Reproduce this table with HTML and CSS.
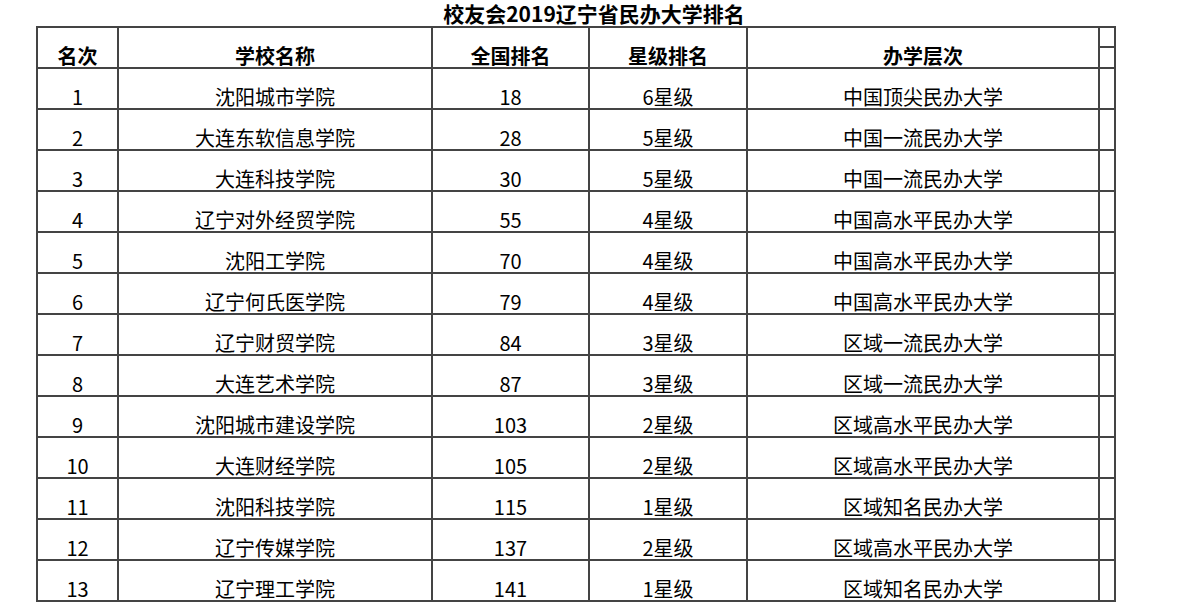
FILE: index.html
```html
<!DOCTYPE html>
<html lang="zh-CN">
<head>
<meta charset="utf-8">
<title>校友会2019辽宁省民办大学排名</title>
<link rel="stylesheet" href="styles.css">
</head>
<body>
<div class="page">
  <div class="title">校友会2019辽宁省民办大学排名</div>
  <table class="rank">
    <colgroup>
      <col class="c-rank">
      <col class="c-name">
      <col class="c-nat">
      <col class="c-star">
      <col class="c-level">
      <col class="c-extra">
    </colgroup>
    <thead>
      <tr class="h1">
        <th rowspan="2">名次</th>
        <th rowspan="2">学校名称</th>
        <th rowspan="2">全国排名</th>
        <th rowspan="2">星级排名</th>
        <th rowspan="2">办学层次</th>
        <th class="extra"></th>
      </tr>
      <tr class="h2">
        <th class="extra"></th>
      </tr>
    </thead>
    <tbody>
      <tr><td>1</td><td>沈阳城市学院</td><td>18</td><td>6星级</td><td>中国顶尖民办大学</td><td></td></tr>
      <tr><td>2</td><td>大连东软信息学院</td><td>28</td><td>5星级</td><td>中国一流民办大学</td><td></td></tr>
      <tr><td>3</td><td>大连科技学院</td><td>30</td><td>5星级</td><td>中国一流民办大学</td><td></td></tr>
      <tr><td>4</td><td>辽宁对外经贸学院</td><td>55</td><td>4星级</td><td>中国高水平民办大学</td><td></td></tr>
      <tr><td>5</td><td>沈阳工学院</td><td>70</td><td>4星级</td><td>中国高水平民办大学</td><td></td></tr>
      <tr><td>6</td><td>辽宁何氏医学院</td><td>79</td><td>4星级</td><td>中国高水平民办大学</td><td></td></tr>
      <tr><td>7</td><td>辽宁财贸学院</td><td>84</td><td>3星级</td><td>区域一流民办大学</td><td></td></tr>
      <tr><td>8</td><td>大连艺术学院</td><td>87</td><td>3星级</td><td>区域一流民办大学</td><td></td></tr>
      <tr><td>9</td><td>沈阳城市建设学院</td><td>103</td><td>2星级</td><td>区域高水平民办大学</td><td></td></tr>
      <tr><td>10</td><td>大连财经学院</td><td>105</td><td>2星级</td><td>区域高水平民办大学</td><td></td></tr>
      <tr><td>11</td><td>沈阳科技学院</td><td>115</td><td>1星级</td><td>区域知名民办大学</td><td></td></tr>
      <tr><td>12</td><td>辽宁传媒学院</td><td>137</td><td>2星级</td><td>区域高水平民办大学</td><td></td></tr>
      <tr><td>13</td><td>辽宁理工学院</td><td>141</td><td>1星级</td><td>区域知名民办大学</td><td></td></tr>
    </tbody>
  </table>
</div>
</body>
</html>
```

FILE: styles.css
```css
html, body {
  margin: 0;
  padding: 0;
  background: #fff;
}

body {
  font-family: "Noto Sans CJK SC", "Noto Sans", sans-serif;
  color: #000;
}

.page {
  padding-left: 36px;
  width: 1080px;
}

.title {
  height: 26px;
  line-height: 26px;
  font-size: 21px;
  font-weight: bold;
  text-align: center;
  padding-left: 36px;
  white-space: nowrap;
}

.rank {
  border-collapse: collapse;
  table-layout: fixed;
  width: 1080px;
}

.c-rank { width: 81px; }
.c-name { width: 314px; }
.c-nat { width: 157px; }
.c-star { width: 158px; }
.c-level { width: 352px; }
.c-extra { width: 16px; }

.rank th,
.rank td {
  border: 2px solid #444;
  padding: 0;
  text-align: center;
  vertical-align: bottom;
  font-size: 20px;
  line-height: 22px;
  white-space: nowrap;
}

.rank th {
  font-weight: bold;
}

.rank tr.h1 { height: 20px; }
.rank tr.h2 { height: 21px; }
.rank tbody tr { height: 41px; }

.rank th.extra {
  font-size: 0;
  line-height: 0;
}
```
